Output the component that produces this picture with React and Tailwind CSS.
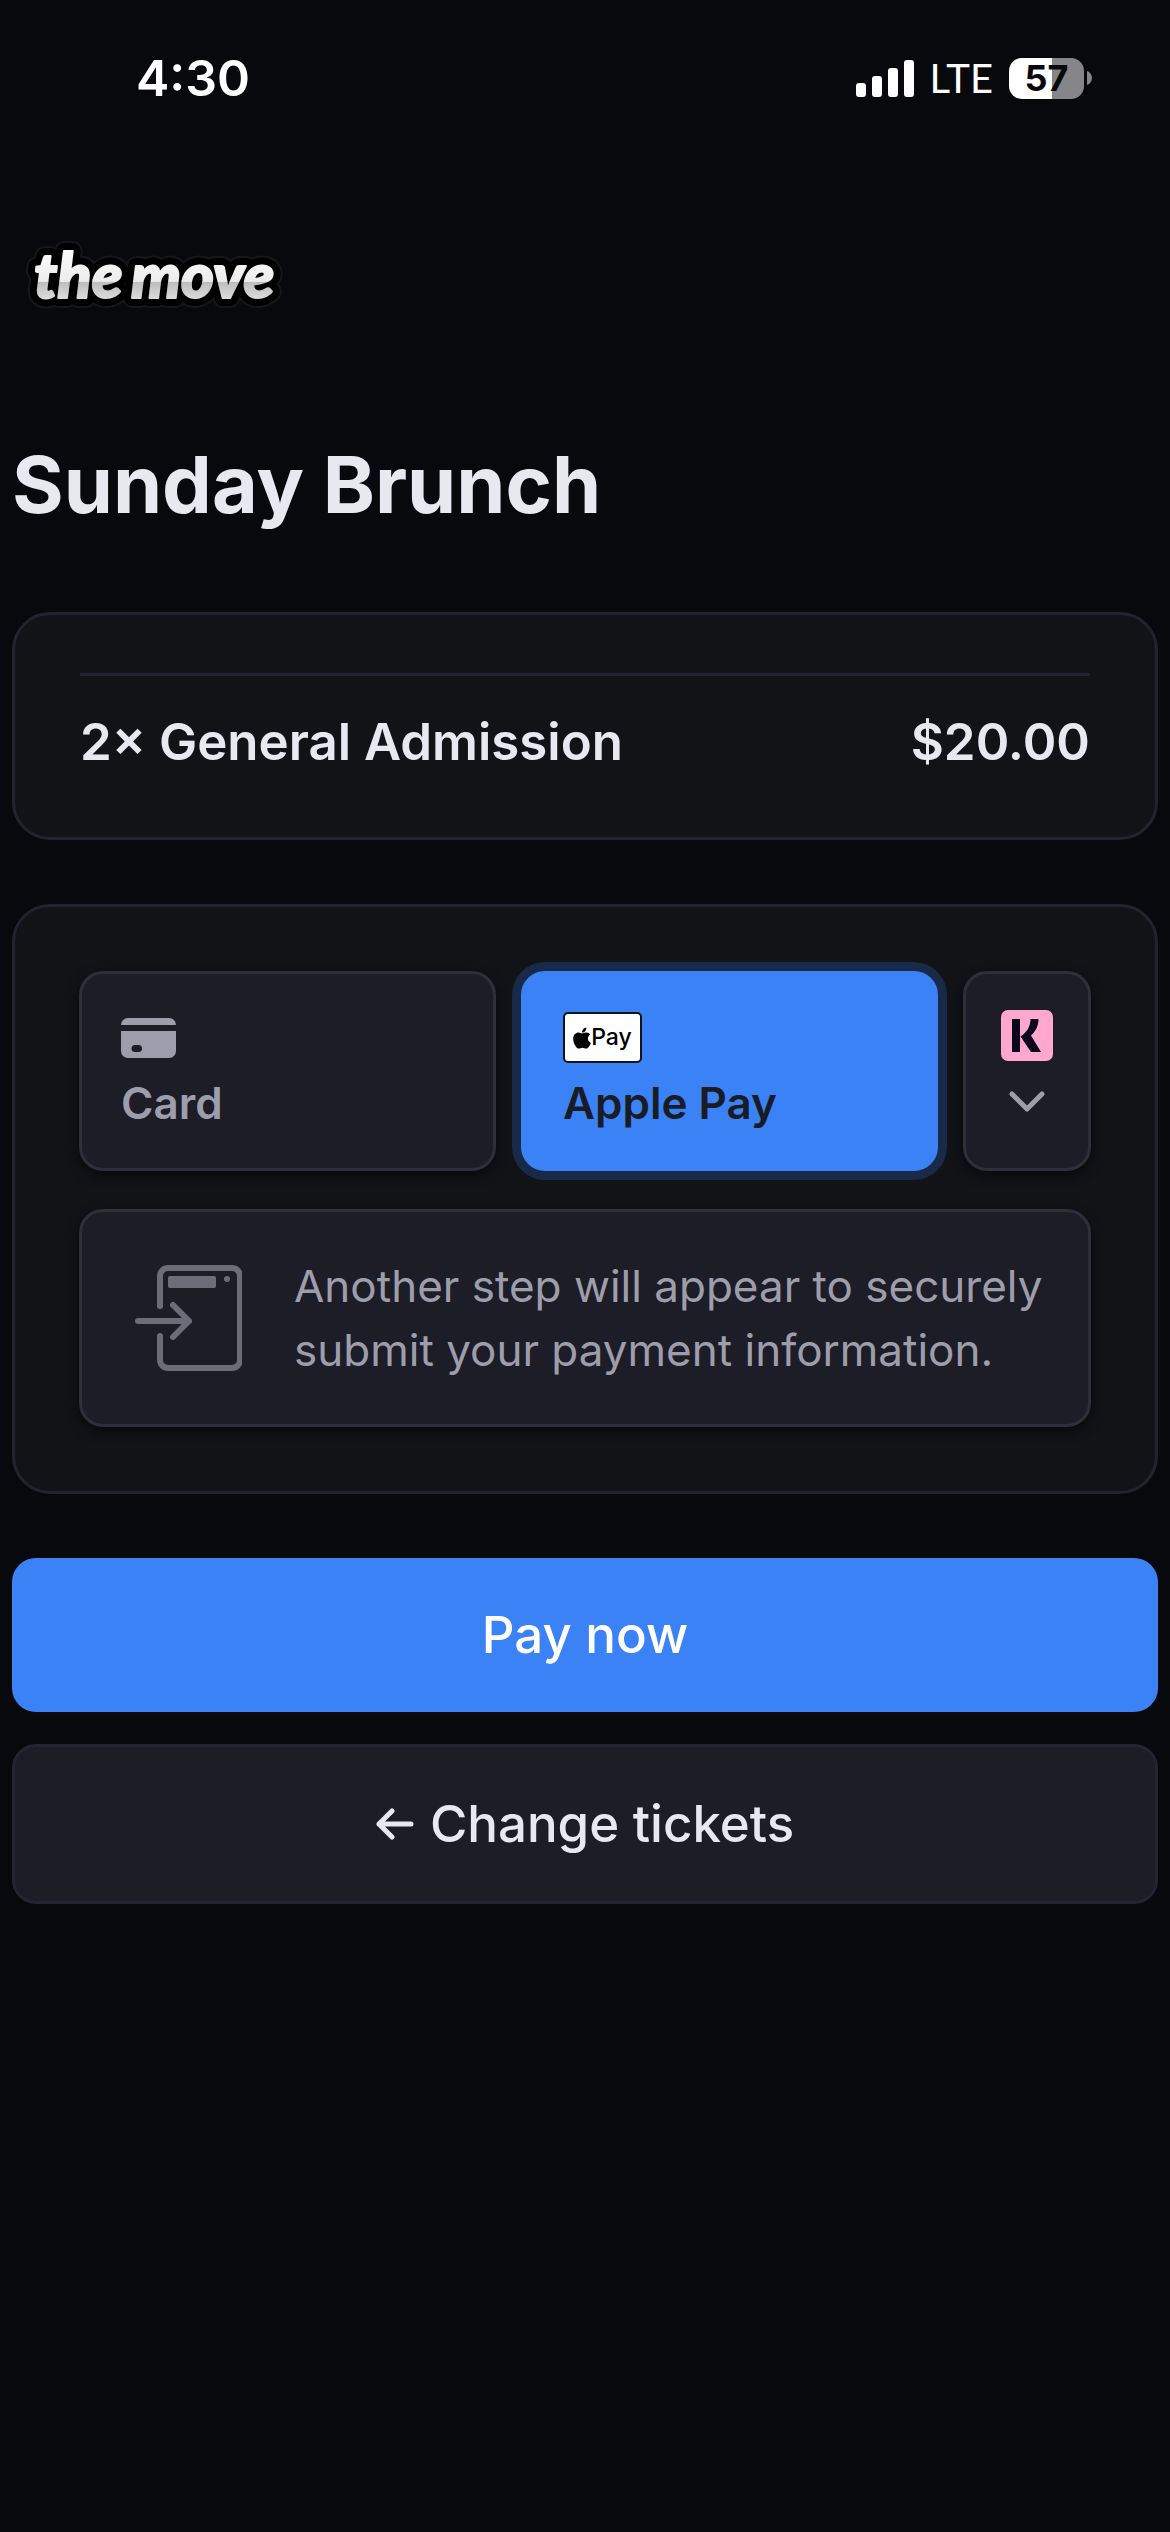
import { useState } from 'react';
import { FaApple } from 'react-icons/fa';

function StatusBar() {
    return (
        <header className="flex items-center justify-between pl-[136px] pr-[78px] pt-12 text-white">
            <span className="text-[50px] leading-[60px] font-semibold">4:30</span>
            <div className="flex items-center gap-4">
                <svg className="w-[58px] h-[38px]" viewBox="0 0 58 38" fill="currentColor">
                    <rect x="0" y="24" width="10" height="14" rx="3" />
                    <rect x="16" y="17" width="10" height="21" rx="3" />
                    <rect x="32" y="9" width="10" height="29" rx="3" />
                    <rect x="48" y="1" width="10" height="37" rx="3" />
                </svg>
                <span className="text-[40px] leading-[60px] font-[Lato,sans-serif]">LTE</span>
                <div className="flex items-center gap-[3px]">
                    <div className="flex items-center justify-center w-[75px] h-[41px] rounded-[13px] bg-linear-to-r from-white from-57% to-[#868688] to-57% text-[#08090d] text-[36px] leading-none font-bold">
                        57
                    </div>
                    <svg className="w-[5px] h-[14px]" viewBox="0 0 5 14" fill="#868688">
                        <path d="M0 0c3 1 5 4 5 7s-2 6-5 7z" />
                    </svg>
                </div>
            </div>
        </header>
    );
}

function Logo() {
    return (
        <svg className="w-[264px] h-[92px]" viewBox="0 0 264 92" role="img" aria-label="the move">
            <defs>
                <linearGradient id="chrome" gradientUnits="userSpaceOnUse" x1="0" y1="18" x2="0" y2="76">
                    <stop offset="0" stopColor="#ffffff" />
                    <stop offset="0.68" stopColor="#ececec" />
                    <stop offset="0.69" stopColor="#bdbdbd" />
                    <stop offset="1" stopColor="#dedede" />
                </linearGradient>
            </defs>
            <g
                className="font-[Lato,sans-serif] font-black italic text-[63px]"
                fill="url(#chrome)"
                strokeLinejoin="round"
            >
                <g stroke="#16171a" strokeWidth="20">
                    <text x="10" y="74">the</text>
                    <text x="107" y="74">move</text>
                </g>
                <g stroke="#000000" strokeWidth="16">
                    <text x="10" y="74">the</text>
                    <text x="107" y="74">move</text>
                </g>
                <g stroke="url(#chrome)" strokeWidth="2">
                    <text x="10" y="74">the</text>
                    <text x="107" y="74">move</text>
                </g>
            </g>
        </svg>
    );
}

function CardIcon() {
    return (
        <svg className="w-[55px] h-[40px]" viewBox="0 0 55 40" fill="currentColor">
            <path d="M0 7a7 7 0 0 1 7-7h41a7 7 0 0 1 7 7z" />
            <path
                fillRule="evenodd"
                d="M0 13h55v20a7 7 0 0 1-7 7H7a7 7 0 0 1-7-7zM14 27a3.5 3.5 0 0 0 0 7h3.500a3.500 3.500 0 0 0 0-7z"
            />
        </svg>
    );
}

function KlarnaIcon() {
    return (
        <svg className="w-[52px] h-[51px]" viewBox="0 0 52 51">
            <rect width="52" height="51" rx="7" fill="#ffa8cd" />
            <path
                fill="#0b051d"
                d="M11 9h8v33h-8zM29.500 9h8c0 7-3 12.500-7.500 16.500L40 42H30L19.500 26.500C26 22.500 29.500 16 29.500 9z"
            />
        </svg>
    );
}

function RedirectIcon() {
    return (
        <svg
            className="w-[108px] h-[108px] shrink-0 text-[#6d6c79]"
            viewBox="0 0 108 108"
            fill="none"
            stroke="currentColor"
            strokeWidth="6"
            strokeLinecap="round"
            strokeLinejoin="round"
        >
            <path d="M26 42V12a8 8 0 0 1 8-8h64a8 8 0 0 1 8 8v84a8 8 0 0 1-8 8H34a8 8 0 0 1-8-8V72" />
            <path d="M4 57h51M39 41l16 16-16 16" />
            <rect x="34" y="12" width="48" height="12" rx="2" fill="currentColor" stroke="none" />
            <circle cx="93" cy="15" r="3" fill="currentColor" stroke="none" />
        </svg>
    );
}

const METHODS = [
    { id: 'card', label: 'Card' },
    { id: 'apple', label: 'Apple Pay' },
];

export default function App() {
    const [method, setMethod] = useState('apple');

    return (
        <div className="min-h-screen bg-[#08090d] text-[#e8e8f0] font-[Inter,sans-serif]">
            <StatusBar />

            <main className="px-3">
                <div className="pl-3 pt-[116px]">
                    <Logo />
                </div>

                <h1 className="mt-[120px] text-[79px] leading-[96px] font-bold">Sunday Brunch</h1>

                {/* Order summary */}
                <section className="mt-20 rounded-[38px] border-3 border-[#232230] bg-[#121317] px-[65px] pt-[58px] pb-16">
                    <div className="flex justify-between border-t-3 border-[#232230] pt-[35px] text-[51px] leading-[62px] font-semibold">
                        <span>2× General Admission</span>
                        <span>$20.00</span>
                    </div>
                </section>

                {/* Payment methods */}
                <section className="mt-16 rounded-[38px] border-3 border-[#232230] bg-[#121317] p-16">
                    <div className="flex gap-[25px]">
                        {METHODS.map((m) => (
                            <button
                                key={m.id}
                                type="button"
                                aria-pressed={method === m.id}
                                onClick={() => setMethod(m.id)}
                                className={`flex flex-1 flex-col items-start gap-4 h-[200px] rounded-3xl border-3 px-[39px] pt-[38px] text-[44px] leading-[48px] font-semibold cursor-pointer ${
                                    method === m.id
                                        ? 'border-[#3b82f6] bg-[#3b82f6] text-[#1a1c25] shadow-[0_0_0_9px_#182a47]'
                                        : 'border-[#2f2e39] bg-[#1d1d27] text-[#9d9dab] shadow-[0_4px_12px_rgba(0,0,0,0.6)]'
                                }`}
                            >
                                <span className="flex items-center h-[51px]">
                                    {m.id === 'card' ? (
                                        <CardIcon />
                                    ) : (
                                        <span className="flex items-center justify-center w-[79px] h-[51px] rounded-[5px] border-2 border-[#10131c] bg-white text-black text-[23px] leading-none font-medium">
                                            <FaApple className="w-[18px] h-[24px]" />
                                            Pay
                                        </span>
                                    )}
                                </span>
                                {m.label}
                            </button>
                        ))}
                        <button
                            type="button"
                            aria-label="More payment methods"
                            className="flex flex-col items-center w-32 h-[200px] rounded-3xl border-3 border-[#2f2e39] bg-[#1d1d27] pt-9 text-[#9d9dab] shadow-[0_4px_12px_rgba(0,0,0,0.6)] cursor-pointer"
                        >
                            <KlarnaIcon />
                            <svg
                                className="mt-[30px] w-[36px] h-[22px]"
                                viewBox="0 0 36 22"
                                fill="none"
                                stroke="currentColor"
                                strokeWidth="5"
                                strokeLinecap="round"
                                strokeLinejoin="round"
                            >
                                <path d="M3 3l15 15L33 3" />
                            </svg>
                        </button>
                    </div>

                    <div className="mt-[38px] flex items-center gap-[52px] rounded-3xl border-3 border-[#2f2e39] bg-[#1d1d27] pl-[52px] pr-10 py-[42px] shadow-[0_4px_12px_rgba(0,0,0,0.6)]">
                        <RedirectIcon />
                        <p className="text-[44px] leading-16 text-[#9d9dab]">
                            Another step will appear to securely submit your payment information.
                        </p>
                    </div>
                </section>

                <div className="mt-16 flex flex-col gap-8 text-[51px] leading-[60px]">
                    <button
                        type="button"
                        className="rounded-3xl bg-[#3b82f6] py-[47px] text-white font-medium cursor-pointer"
                    >
                        Pay now
                    </button>
                    <button
                        type="button"
                        className="flex items-center justify-center gap-4 rounded-3xl border-3 border-[#252432] bg-[#1d1d27] py-[47px] font-medium cursor-pointer"
                    >
                        <svg
                            className="w-[38px] h-[32px]"
                            viewBox="0 0 38 32"
                            fill="none"
                            stroke="currentColor"
                            strokeWidth="5"
                            strokeLinecap="round"
                            strokeLinejoin="round"
                        >
                            <path d="M35 16H3M16 3L3 16l13 13" />
                        </svg>
                        Change tickets
                    </button>
                </div>
            </main>
        </div>
    );
}
